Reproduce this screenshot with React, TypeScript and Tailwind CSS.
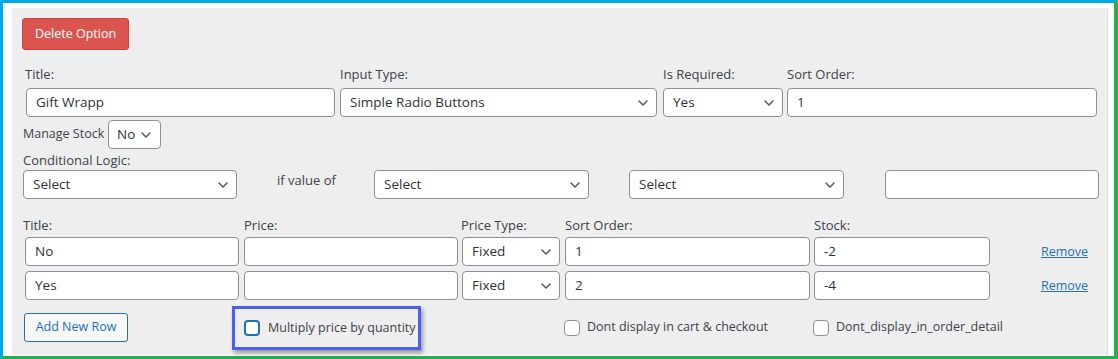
import React from 'react'

const FONT = { fontFamily: '"Open Sans", "Noto Sans", sans-serif' }

function Chevron() {
  return (
    <svg width="10" height="6" viewBox="0 0 10 6" className="shrink-0">
      <path d="M1 1 L5 5 L9 1" fill="none" stroke="#50575e" strokeWidth="1.5" strokeLinecap="round" strokeLinejoin="round" />
    </svg>
  )
}

function TextBox({ value = '', w }: { value?: string; w: string }) {
  return (
    <div className={`${w} h-[29px] flex items-center pl-[9px] bg-white border border-[#8c8f94] rounded-[4px] text-[13.5px] text-[#2c3338]`}>
      {value}
    </div>
  )
}

function SelectBox({ value, w }: { value: string; w: string }) {
  return (
    <div className={`${w} h-[29px] flex items-center justify-between pl-[9px] pr-[8px] bg-white border border-[#8c8f94] rounded-[4px] text-[13.5px] text-[#2c3338]`}>
      <span>{value}</span>
      <Chevron />
    </div>
  )
}

function Label({ children, className = '' }: { children: React.ReactNode; className?: string }) {
  return <div className={`h-[18px] leading-[18px] text-[13px] text-[#3c434a] ${className}`}>{children}</div>
}

function Checkbox({ focused = false }: { focused?: boolean }) {
  return (
    <span
      className={`inline-block w-[16px] h-[16px] rounded-[4px] bg-white shrink-0 ${
        focused ? 'border-2 border-[#2271b1]' : 'border border-[#8c8f94]'
      }`}
    />
  )
}

export default function App() {
  const rows = [
    { title: 'No', sort: '1', stock: '-2' },
    { title: 'Yes', sort: '2', stock: '-4' },
  ]

  return (
    <div
      className="w-[1118px] h-[359px] bg-white border-t-[3px] border-l-[3px] border-r-[4px] border-b-[3px] border-t-[#00a8e8] border-l-[#00a8e8] border-r-[#22b14c] border-b-[#22b14c] pl-[9px] pt-[5px] pr-[6px] pb-[1px]"
      style={FONT}
    >
      <div className="h-full bg-[#eeeeee] border-r border-[#e0e0e0] pt-[10px]">
        {/* Delete */}
        <button className="ml-[10px] w-[107px] h-[32px] rounded-[3px] bg-[#db5550] border border-[#d0443f] text-white text-[12.5px]">
          Delete Option
        </button>

        {/* Option header row */}
        <div className="flex mt-[15px] ml-[14px]">
          <div className="flex flex-col gap-[5px]">
            <Label className="-ml-[1px]">Title:</Label>
            <TextBox value="Gift Wrapp" w="w-[309px]" />
          </div>
          <div className="flex flex-col gap-[5px] ml-[5px]">
            <Label>Input Type:</Label>
            <SelectBox value="Simple Radio Buttons" w="w-[317px]" />
          </div>
          <div className="flex flex-col gap-[5px] ml-[6px]">
            <Label>Is Required:</Label>
            <SelectBox value="Yes" w="w-[120px]" />
          </div>
          <div className="flex flex-col gap-[5px] ml-[4px]">
            <Label>Sort Order:</Label>
            <TextBox value="1" w="w-[310px]" />
          </div>
        </div>

        {/* Manage stock */}
        <div className="flex items-center mt-[3px] ml-[11px]">
          <span className="text-[12.5px] text-[#3c434a] w-[85px]">Manage Stock</span>
          <div className="w-[53px] h-[29px] flex items-center gap-[6px] pl-[8px] bg-white border border-[#8c8f94] rounded-[4px] text-[13.5px] text-[#2c3338]">
            <span>No</span>
            <Chevron />
          </div>
        </div>

        {/* Conditional logic */}
        <Label className="ml-[11px] mt-[2px]">Conditional Logic:</Label>
        <div className="flex mt-[1px] ml-[11px]">
          <SelectBox value="Select" w="w-[214px]" />
          <span className="ml-[40px] w-[97px] text-[13px] text-[#3c434a] leading-[18px] pt-[1px]">if value of</span>
          <SelectBox value="Select" w="w-[215px]" />
          <div className="ml-[40px]">
            <SelectBox value="Select" w="w-[215px]" />
          </div>
          <div className="ml-[41px]">
            <TextBox w="w-[214px]" />
          </div>
        </div>

        {/* Values table header */}
        <div className="flex mt-[17px] ml-[11px]">
          <Label className="w-[221px]">Title:</Label>
          <Label className="w-[217px]">Price:</Label>
          <Label className="w-[104px]">Price Type:</Label>
          <Label className="w-[249px]">Sort Order:</Label>
          <Label>Stock:</Label>
        </div>

        <div className="flex flex-col gap-[5px] mt-[3px] ml-[13px]">
          {rows.map(r => (
            <div key={r.title} className="flex items-center">
              <TextBox value={r.title} w="w-[214px]" />
              <div className="ml-[5px]">
                <TextBox w="w-[214px]" />
              </div>
              <div className="ml-[4px]">
                <SelectBox value="Fixed" w="w-[98px]" />
              </div>
              <div className="ml-[5px]">
                <TextBox value={r.sort} w="w-[245px]" />
              </div>
              <div className="ml-[4px]">
                <TextBox value={r.stock} w="w-[176px]" />
              </div>
              <a className="ml-[51px] pt-[2px] text-[12.5px] text-[#2271b1] underline">Remove</a>
            </div>
          ))}
        </div>

        {/* Footer */}
        <div className="flex items-center mt-[5px] ml-[12px]">
          <button className="w-[104px] h-[29px] rounded-[3px] border border-[#2271b1] bg-[#f6f7f7] text-[#2271b1] text-[12.5px]">
            Add New Row
          </button>
          <div className="ml-[104px] mt-[1px] w-[189px] h-[44px] flex items-center gap-[8px] pl-[9px] border-[3px] border-[#4a5ef2] shadow-[2px_3px_4px_rgba(0,0,0,0.35)]">
            <Checkbox focused />
            <span className="text-[12.5px] text-[#3c434a]">Multiply price by quantity</span>
          </div>
          <div className="ml-[143px] w-[249px] flex items-center gap-[7px]">
            <Checkbox />
            <span className="text-[12.5px] text-[#3c434a]">Dont display in cart &amp; checkout</span>
          </div>
          <div className="flex items-center gap-[7px]">
            <Checkbox />
            <span className="text-[12.5px] text-[#3c434a]">Dont_display_in_order_detail</span>
          </div>
        </div>
      </div>
    </div>
  )
}
